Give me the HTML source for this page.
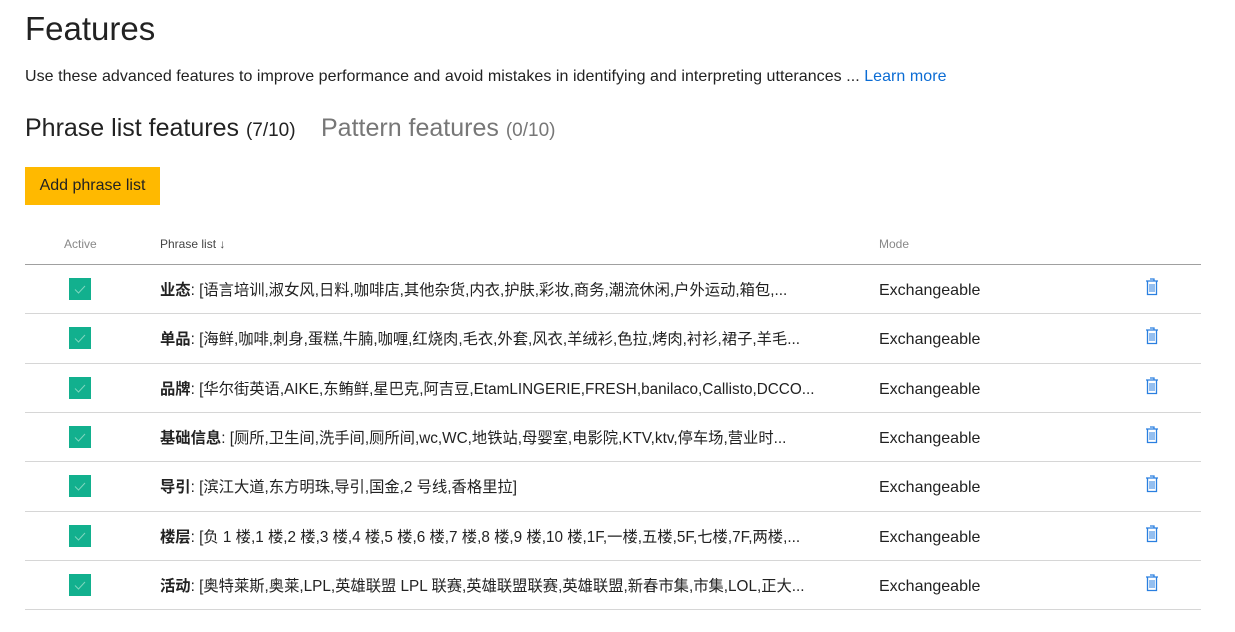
<!DOCTYPE html>
<html><head><meta charset="utf-8"><style>
*{margin:0;padding:0;box-sizing:border-box}
body{width:1235px;height:632px;background:#fff;font-family:"Liberation Sans","Noto Sans CJK SC",sans-serif;color:#222;position:relative;overflow:hidden}
.a{position:absolute;white-space:nowrap}
h1{position:absolute;left:25px;top:10px;font-size:33px;font-weight:300;color:#222}
.sub{left:25px;top:68px;font-size:16px;color:#222;letter-spacing:0.05px}
.sub a{color:#0b6cd4;text-decoration:none}
.tab{top:114px;font-size:25px;font-weight:300}
.tab small{font-size:19px}
.btn{left:25px;top:167px;width:135px;height:38px;background:#ffb900;font-size:16px;line-height:38px;text-align:center;color:#222}
.hd{top:237px;font-size:12px;color:#888}
.line{position:absolute;left:25px;width:1176px;height:1px;background:#d6d6d6}
.cb{position:absolute;left:69px;width:22px;height:22px;background:#12b08e}
.cb svg{position:absolute;left:3px;top:3px}
.ph{left:160px;font-size:15.3px;line-height:20px;color:#222}
.md{left:879px;font-size:16px;line-height:20px;color:#222}
.tr{position:absolute;left:1145px}
</style></head><body>
<h1>Features</h1>
<div class="a sub">Use these advanced features to improve performance and avoid mistakes in identifying and interpreting utterances ... <a>Learn more</a></div>
<div class="a tab" style="left:25px;color:#222">Phrase list features <small>(7/10)</small></div>
<div class="a tab" style="left:321px;color:#777">Pattern features <small>(0/10)</small></div>
<div class="a btn">Add phrase list</div>
<div class="a hd" style="left:64px">Active</div>
<div class="a hd" style="left:160px;color:#444">Phrase list ↓</div>
<div class="a hd" style="left:879px">Mode</div>
<div class="line" style="top:264px;background:#a0a0a0"></div>
<div id="rows"></div>
<script>
var d=[["业态","[语言培训,淑女风,日料,咖啡店,其他杂货,内衣,护肤,彩妆,商务,潮流休闲,户外运动,箱包,..."],
["单品","[海鲜,咖啡,刺身,蛋糕,牛腩,咖喱,红烧肉,毛衣,外套,风衣,羊绒衫,色拉,烤肉,衬衫,裙子,羊毛..."],
["品牌","[华尔街英语,AIKE,东鲔鲜,星巴克,阿吉豆,EtamLINGERIE,FRESH,banilaco,Callisto,DCCO..."],
["基础信息","[厕所,卫生间,洗手间,厕所间,wc,WC,地铁站,母婴室,电影院,KTV,ktv,停车场,营业时..."],
["导引","[滨江大道,东方明珠,导引,国金,2 号线,香格里拉]"],
["楼层","[负 1 楼,1 楼,2 楼,3 楼,4 楼,5 楼,6 楼,7 楼,8 楼,9 楼,10 楼,1F,一楼,五楼,5F,七楼,7F,两楼,..."],
["活动","[奥特莱斯,奥莱,LPL,英雄联盟 LPL 联赛,英雄联盟联赛,英雄联盟,新春市集,市集,LOL,正大..."]];
var h="";
for(var i=0;i<7;i++){var t=264+i*49.3;var c=Math.round(t+25);
h+='<div class="cb" style="top:'+(c-11)+'px"><svg width="16" height="16"><path d="M3 8.5l3.5 3.5L13 5" stroke="#7fd6bf" stroke-width="1" fill="none"/></svg></div>';
h+='<div class="a ph" style="top:'+(c-8)+'px"><b>'+d[i][0]+'</b>: '+d[i][1]+'</div>';
h+='<div class="a md" style="top:'+(c-8)+'px">Exchangeable</div>';
h+='<svg class="tr" style="top:'+(c-11)+'px" width="14" height="18" viewBox="0 0 14 18"><path d="M5 1h4v2M1 3h12M2.5 3.5v13h9v-13" stroke="#2a7fe0" stroke-width="1.3" fill="none"/><path d="M5 6v8M7 6v8M9 6v8" stroke="#2a7fe0" stroke-width="1"/></svg>';
h+='<div class="line" style="top:'+Math.round(t+49.3)+'px"></div>';}
document.getElementById("rows").innerHTML=h;
</script>
</body></html>
